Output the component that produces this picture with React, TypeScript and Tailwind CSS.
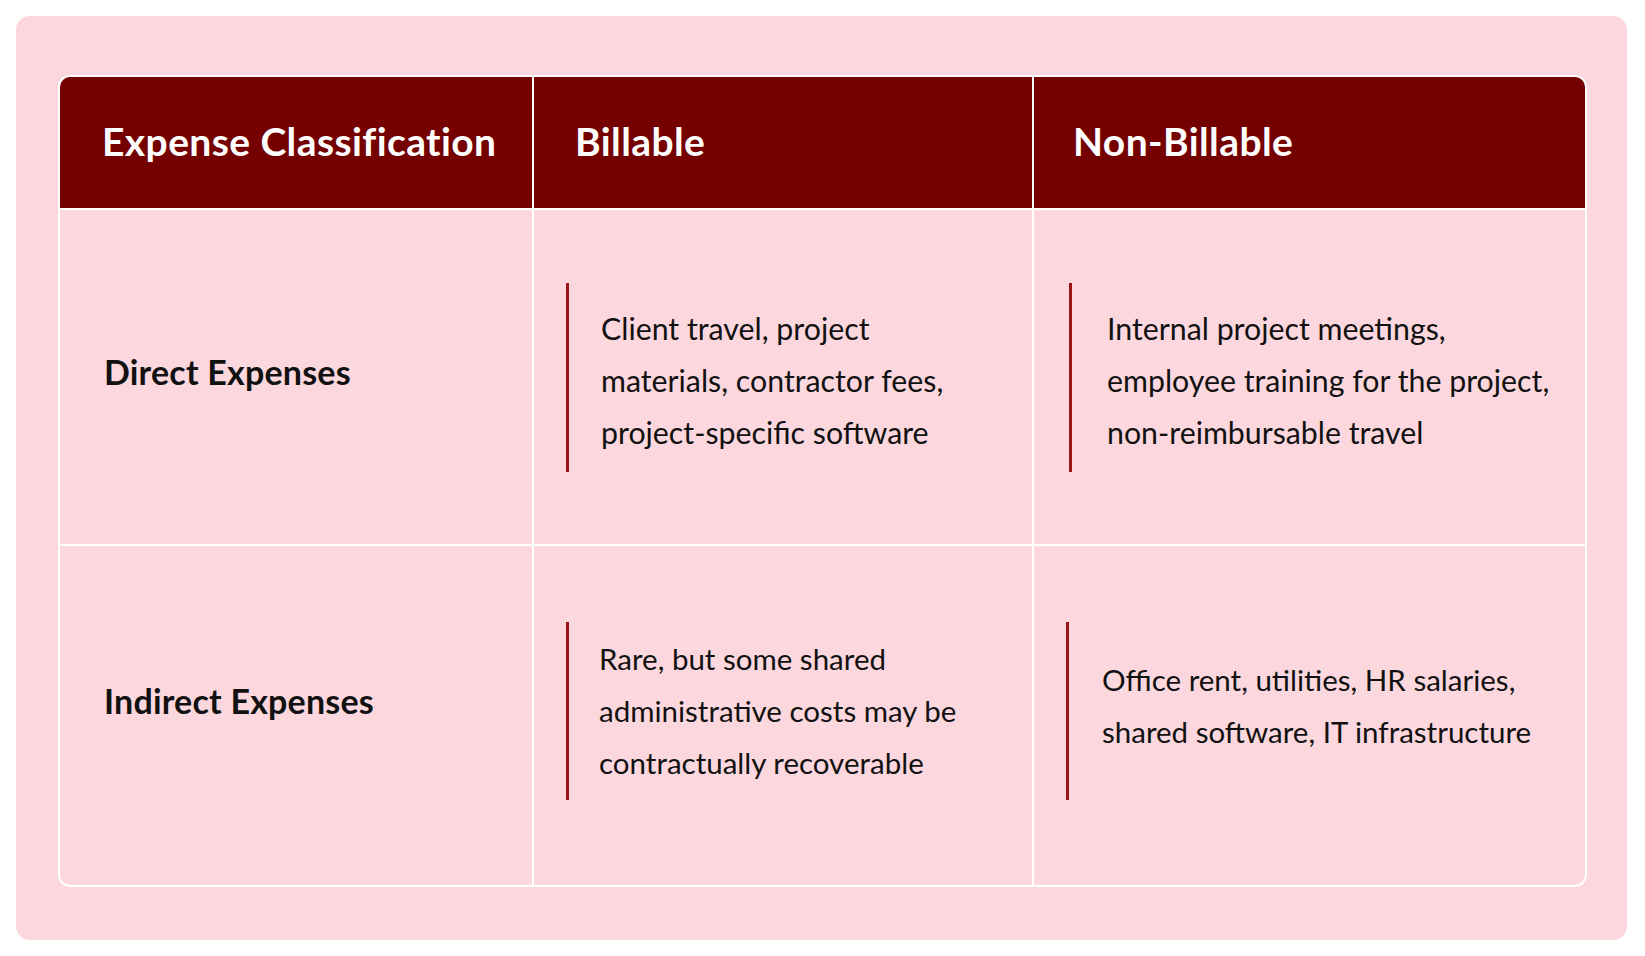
import React from "react";

const Bar = ({ h, children }: { h: string; children: React.ReactNode }) => (
  <div className={`flex items-center border-l-[3px] border-[#9a1418] ${h}`}>{children}</div>
);

export default function App() {
  return (
    <div className="w-[1645px] h-[956px] bg-white p-4" style={{ fontFamily: "Lato, 'Open Sans', sans-serif" }}>
      <div className="w-[1611px] h-[924px] rounded-[14px] bg-[#fcd8de] pl-[43px] pr-[39px] pt-[60px]">
        <div className="w-[1529px] rounded-[12px] border-2 border-white overflow-hidden -mt-[1px] -ml-[1px]">
          <div className="grid grid-cols-[474px_500px_1fr] h-[133px] bg-[#740000] border-b-2 border-white text-white font-bold text-[39px] tracking-[0.4px]">
            <div className="flex items-center pl-[42px] pb-[2px] border-r-2 border-white">Expense Classification</div>
            <div className="flex items-center pl-[41px] pb-[2px] border-r-2 border-white">Billable</div>
            <div className="flex items-center pl-[39px] pb-[2px]">Non-Billable</div>
          </div>
          <div className="grid grid-cols-[474px_500px_1fr] h-[336px] border-b-2 border-white text-[#111]">
            <div className="flex items-center pl-[44px] pb-[12px] border-r-2 border-white font-bold text-[34px] tracking-[0.2px]">Direct Expenses</div>
            <div className="flex items-center pl-[32px] border-r-2 border-white">
              <Bar h="h-[189px]">
                <div className="pl-[32px] text-[30.3px] leading-[52px] pt-[6px]">
                  Client travel, project<br />materials, contractor fees,<br />project-specific software
                </div>
              </Bar>
            </div>
            <div className="flex items-center pl-[35px]">
              <Bar h="h-[189px]">
                <div className="pl-[35px] text-[30.3px] leading-[52px] pt-[6px]">
                  Internal project meetings,<br />employee training for the project,<br />non-reimbursable travel
                </div>
              </Bar>
            </div>
          </div>
          <div className="grid grid-cols-[474px_500px_1fr] h-[339px] text-[#111]">
            <div className="flex items-center pl-[44px] pb-[30px] border-r-2 border-white font-bold text-[34px] tracking-[0.2px]">Indirect Expenses</div>
            <div className="flex items-center pl-[32px] pb-[10px] border-r-2 border-white">
              <Bar h="h-[178px]">
                <div className="pl-[30px] text-[29.5px] leading-[52px]">
                  Rare, but some shared<br />administrative costs may be<br />contractually recoverable
                </div>
              </Bar>
            </div>
            <div className="flex items-center pl-[32px] pb-[10px]">
              <Bar h="h-[178px]">
                <div className="pl-[33px] text-[29.5px] leading-[52px] pb-[10px]">
                  Office rent, utilities, HR salaries,<br />shared software, IT infrastructure
                </div>
              </Bar>
            </div>
          </div>
        </div>
      </div>
    </div>
  );
}
